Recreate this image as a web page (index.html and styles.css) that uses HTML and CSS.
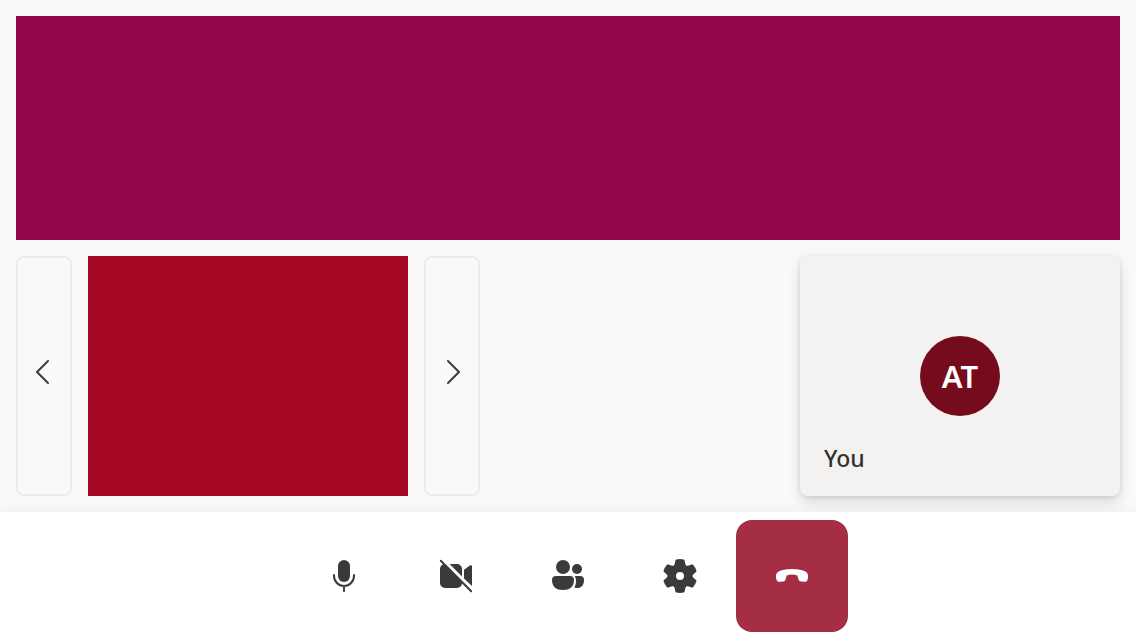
FILE: index.html
```html
<!DOCTYPE html>
<html lang="en">
<head>
<meta charset="utf-8">
<meta name="viewport" content="width=device-width, initial-scale=1">
<title>Call</title>
<link rel="stylesheet" href="styles.css">
</head>
<body>
<div class="call">
  <main class="stage">
    <section class="speaker" aria-label="Active speaker"></section>
    <div class="strip">
      <button class="pager" type="button" aria-label="Previous participants">
        <svg class="icon" viewBox="0 0 20 20" aria-hidden="true"><path class="line" d="M12 4.500 6.500 10l5.500 5.500"/></svg>
      </button>
      <section class="participant" aria-label="Participant"></section>
      <button class="pager" type="button" aria-label="Next participants">
        <svg class="icon" viewBox="0 0 20 20" aria-hidden="true"><path class="line" d="M8 4.500 13.500 10 8 15.500"/></svg>
      </button>
      <section class="self" aria-label="Your tile">
        <div class="avatar">AT</div>
        <span class="name">You</span>
      </section>
    </div>
  </main>
  <footer class="controls">
    <button class="control" type="button" aria-label="Microphone">
      <svg class="icon" viewBox="0 0 20 20" aria-hidden="true"><rect x="7" y="2" width="6" height="11" rx="3"/><path class="line" d="M5 9.500V10a5 5 0 0 0 10 0v-.5M10 15v2.500"/></svg>
    </button>
    <button class="control" type="button" aria-label="Turn camera on">
      <svg class="icon" viewBox="0 0 20 20" aria-hidden="true"><path d="M3.400 4.200 4 4l9 9v.5a2.500 2.500 0 0 1-2.500 2.500h-6A2.500 2.500 0 0 1 2 13.500v-7c0-1 .5-1.900 1.400-2.300ZM6.800 4h3.700A2.500 2.500 0 0 1 13 6.500v3.700ZM14 6.900l2.900-2.200c.5-.3 1.100 0 1.100.5v9.800L14 11.200Z"/><path class="line" d="m2.400 2.400 15.200 15.200"/></svg>
    </button>
    <button class="control" type="button" aria-label="People">
      <svg class="icon" viewBox="0 0 20 20" aria-hidden="true"><circle cx="7.500" cy="5.500" r="3.500"/><circle cx="14.500" cy="6.500" r="2.500"/><path d="M4 10h7a2 2 0 0 1 2 2c0 3.500-2.300 5-5.500 5S2 15.500 2 12a2 2 0 0 1 2-2ZM13.300 10H16a2 2 0 0 1 2 2c0 2.800-1.400 4-3.500 4-.5 0-1 0-1.400-.2.6-.9.9-2.100.9-3.300 0-1-.2-1.800-.7-2.500Z"/></svg>
    </button>
    <button class="control" type="button" aria-label="Settings">
      <svg class="icon" viewBox="0 0 20 20" aria-hidden="true"><path fill-rule="evenodd" d="M8.200 1.700Q10 1.300 11.800 1.700 12.200 1.800 12.300 2.200L12.700 4.100C12.850 4.700 13.450 5.050 14 4.850L15.800 4.200Q16.200 4.100 16.500 4.400 17.700 5.700 18.200 7.400 18.300 7.800 18 8.050L16.600 9.300C16.150 9.700 16.150 10.300 16.600 10.700L18 11.950Q18.300 12.200 18.200 12.600 17.700 14.300 16.500 15.600 16.200 15.900 15.800 15.800L14 15.150C13.450 14.950 12.850 15.300 12.700 15.900L12.300 17.800Q12.200 18.200 11.800 18.300 10 18.700 8.200 18.300 7.800 18.200 7.700 17.800L7.300 15.900C7.150 15.300 6.550 14.950 6 15.150L4.200 15.800Q3.800 15.900 3.500 15.600 2.300 14.300 1.800 12.600 1.700 12.200 2 11.950L3.400 10.700C3.850 10.300 3.850 9.700 3.400 9.300L2 8.050Q1.700 7.800 1.800 7.400 2.300 5.700 3.500 4.400 3.800 4.100 4.200 4.200L6 4.850C6.550 5.050 7.150 4.700 7.300 4.100L7.700 2.200Q7.800 1.800 8.200 1.700ZM10 8a2 2 0 1 0 0 4 2 2 0 0 0 0-4Z"/></svg>
    </button>
    <button class="control leave" type="button" aria-label="Leave call">
      <svg class="icon" viewBox="0 0 20 20" aria-hidden="true"><path d="m17.960 10.940-.15.820c-.14.770-.85 1.240-1.640 1.160l-1.600-.15c-.7-.07-1.200-.6-1.400-1.300-.3-1-.5-1.750-.5-1.750-.8-.32-1.680-.5-2.670-.5-1 0-1.830.2-2.670.5 0 0-.2.750-.48 1.750-.2.700-.53 1.230-1.220 1.300l-1.600.15c-.79.080-1.590-.39-1.830-1.160l-.16-.8c-.27-1.270.1-2.330 1.060-3.040C4.650 6.870 7.060 6.500 9.950 6.500c2.950 0 5.400.4 7 1.420.95.770 1.280 1.780 1.010 3.020Z"/></svg>
    </button>
  </footer>
</div>
</body>
</html>
```
FILE: styles.css
```css
* { box-sizing: border-box; }

body {
  margin: 0;
  background: #faf9f8;
  color: #323130;
  font-family: "Noto Sans", "Open Sans", sans-serif;
}

button {
  display: flex;
  align-items: center;
  justify-content: center;
  padding: 0;
  border: 0;
  background: transparent;
  color: #3b3a39;
  font: inherit;
  cursor: pointer;
}

.call {
  display: flex;
  flex-direction: column;
  min-height: 100vh;
}

.stage {
  display: flex;
  flex: 1;
  flex-direction: column;
  gap: 16px;
  padding: 16px;
}

.speaker {
  flex: 1;
  background: #91064a;
}

.strip {
  display: flex;
  gap: 16px;
  min-height: 240px;
}

.pager {
  width: 56px;
  padding-bottom: 8px;
  border: 2px solid #edebe9;
  border-radius: 8px;
}

.participant {
  flex: 0 1 320px;
  background: #a40822;
}

.self {
  display: grid;
  flex: 0 1 320px;
  grid-template-rows: 1fr auto 1fr;
  margin-left: auto;
  padding: 0 24px;
  border-radius: 8px;
  background: #f3f2f1;
  box-shadow: 0 6px 14px rgba(0, 0, 0, 0.13), 0 1px 4px rgba(0, 0, 0, 0.11);
}

.avatar {
  display: flex;
  grid-row: 2;
  align-items: center;
  justify-content: center;
  justify-self: center;
  width: 80px;
  height: 80px;
  border-radius: 50%;
  background: #750b1c;
  color: #fff;
  font-size: 31px;
  font-weight: 600;
  line-height: 40px;
}

.name {
  grid-row: 3;
  align-self: end;
  padding-bottom: 20px;
  font-size: 23px;
  font-weight: 500;
  line-height: 36px;
}

.controls {
  position: relative;
  display: flex;
  justify-content: center;
  padding: 8px;
  background: #fff;
  box-shadow: 0 0 14px rgba(0, 0, 0, 0.05);
}

.control {
  width: 112px;
  height: 112px;
  border-radius: 16px;
}

.leave {
  background: #a42e43;
  color: #fff;
}

.icon {
  width: 40px;
  height: 40px;
  fill: currentColor;
}

.line {
  fill: none;
  stroke: currentColor;
  stroke-width: 1;
  stroke-linecap: round;
  stroke-linejoin: round;
}
```
